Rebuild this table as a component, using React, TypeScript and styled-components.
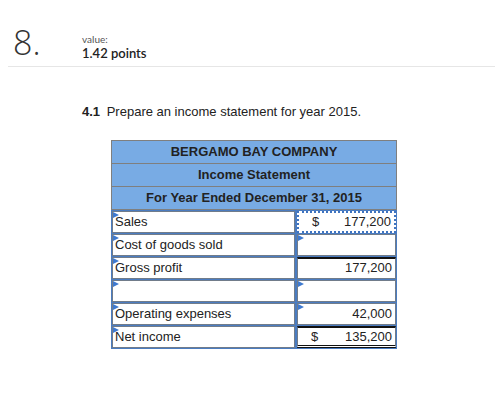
import styled, { createGlobalStyle, css } from "styled-components";

const GlobalStyle = createGlobalStyle`
  body {
    margin: 0;
    background: #ffffff;
    font-family: "Liberation Sans", Arial, sans-serif;
    color: #222;
  }
`;

type Row = {
  label: string;
  value: string;
  dollar?: boolean;
  labelMark?: boolean;
  valueMark?: boolean;
  selected?: boolean;
  rule?: "single" | "double";
};

const rows: Array<Row> = [
  { label: "Sales", value: "177,200", dollar: true, labelMark: true, selected: true },
  { label: "Cost of goods sold", value: "", labelMark: true, valueMark: true },
  { label: "Gross profit", value: "177,200", labelMark: true, rule: "single" },
  { label: "", value: "", labelMark: true, valueMark: true },
  { label: "Operating expenses", value: "42,000", labelMark: true, valueMark: true },
  { label: "Net income", value: "135,200", dollar: true, labelMark: true, rule: "double" },
];

const headings = ["BERGAMO BAY COMPANY", "Income Statement", "For Year Ended December 31, 2015"];

const App = () => {
  return (
    <Page>
      <GlobalStyle />
      <QuestionHeader>
        <QuestionNumber>8.</QuestionNumber>
        <Meta>
          <MetaLabel>value:</MetaLabel>
          <MetaPoints>1.42 points</MetaPoints>
        </Meta>
      </QuestionHeader>
      <Body>
        <Prompt>
          <b>4.1</b> Prepare an income statement for year 2015.
        </Prompt>
        <Statement>
          {headings.map((h) => (
            <HeadRow key={h}>{h}</HeadRow>
          ))}
          <DataGrid>
            {rows.flatMap((r, i) => [
              <LabelCell key={"l" + i} $mark={r.labelMark}>{r.label}</LabelCell>,
              <ValueCell key={"v" + i} $mark={r.valueMark} $selected={r.selected} $rule={r.rule}>
                {r.dollar ? <Dollar>$</Dollar> : <span />}
                <span>{r.value}</span>
              </ValueCell>,
            ])}
          </DataGrid>
        </Statement>
      </Body>
    </Page>
  );
};

export default App;

const Page = styled.div`
  width: 500px;
  height: 398px;
  position: relative;
`;

const QuestionHeader = styled.div`
  display: flex;
  align-items: flex-start;
  margin: 0 5px 0 8px;
  padding: 24px 0 5px 5px;
  border-bottom: 1px solid #e6e6e6;
`;

const QuestionNumber = styled.div`
  width: 69px;
  font-family: "Open Sans", sans-serif;
  font-weight: 300;
  font-size: 34px;
  line-height: 36px;
  color: #333;
`;

const Meta = styled.div`
  display: flex;
  flex-direction: column;
  padding-top: 9px;
`;

const MetaLabel = styled.span`
  font-family: "Lato", sans-serif;
  font-size: 10px;
  line-height: 12px;
  color: #555;
`;

const MetaPoints = styled.span`
  font-family: "Lato", sans-serif;
  font-size: 13px;
  line-height: 16px;
  font-weight: 600;
  color: #222;
`;

const Body = styled.div`
  padding: 37px 0 0 82px;
`;

const Prompt = styled.div`
  font-size: 13px;
  line-height: 16px;
  color: #222;
  b {
    margin-right: 3px;
  }
`;

const Statement = styled.div`
  width: 286px;
  margin: 20px 0 0 29px;
`;

const HeadRow = styled.div`
  height: 22px;
  line-height: 22px;
  background: #78abe4;
  border: 1px solid #7f7f7f;
  border-top-width: 0;
  &:first-child {
    border-top-width: 1px;
  }
  text-align: center;
  font-weight: bold;
  font-size: 13px;
  color: #222;
`;

const DataGrid = styled.div`
  display: grid;
  grid-template-columns: 183px 1fr;
  column-gap: 2px;
  row-gap: 1px;
  background: #4a7cc1;
  padding: 0 1px 1px 1px;
  border-top: 1px dotted #4a7cc1;
`;

const mark = css`
  &::before {
    content: "";
    position: absolute;
    left: 0;
    top: 0;
    border-top: 3px solid transparent;
    border-bottom: 3px solid transparent;
    border-left: 6px solid #3f7ad0;
  }
`;

const Cell = styled.div<{ $mark?: boolean }>`
  position: relative;
  height: 20px;
  line-height: 19px;
  background: #fff;
  border: 1px solid #717c8a;
  font-size: 13px;
  color: #222;
  ${(p) => p.$mark && mark}
`;

const LabelCell = styled(Cell)`
  padding-left: 2px;
  white-space: nowrap;
`;

const ValueCell = styled(Cell)<{ $selected?: boolean; $rule?: "single" | "double" }>`
  display: flex;
  justify-content: space-between;
  padding: 0 3px 0 12px;
  ${(p) =>
    p.$selected &&
    css`
      border: 2px dotted #3f74c0;
      line-height: 17px;
      height: 18px;
    `}
  ${(p) =>
    p.$rule &&
    css`
      border-top: 2px solid #111;
      height: 19px;
      line-height: 18px;
    `}
  ${(p) =>
    p.$rule === "double" &&
    css`
      border-bottom: 3px double #111;
      height: 17px;
    `}
`;

const Dollar = styled.span`
  margin-left: 1px;
`;
